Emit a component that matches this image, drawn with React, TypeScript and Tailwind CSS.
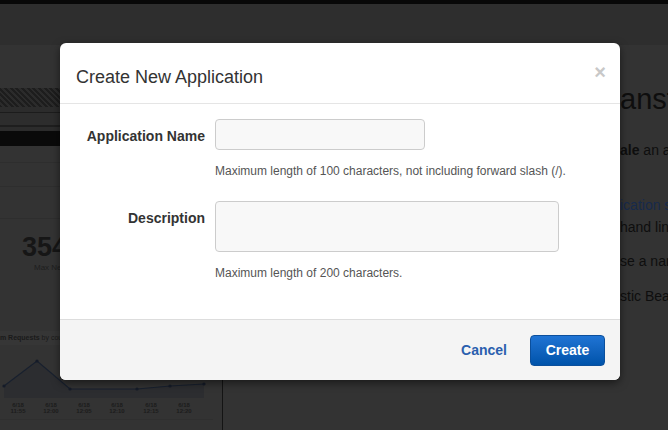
import React from 'react';

const chartPoints: [number, number][] = [
  [4, 39],
  [37, 14],
  [70, 42],
  [137, 42],
  [170, 39],
  [204, 37],
];

const chartLabels = [
  { x: 18, time: '11:55' },
  { x: 51, time: '12:00' },
  { x: 84, time: '12:05' },
  { x: 117, time: '12:10' },
  { x: 151, time: '12:15' },
  { x: 184, time: '12:20' },
];

const RequestsChart: React.FC = () => {
  const line = chartPoints.map(([x, y]) => `${x},${y}`).join(' ');
  const area = `4,51 ${line} 204,51`;
  return (
    <svg width="213" height="72" viewBox="0 0 213 72" className="block">
      <polygon points={area} fill="#2c2d30" />
      <polyline points={line} fill="none" stroke="#18202e" strokeWidth="1.2" />
      {chartPoints.map(([x, y]) => (
        <circle key={x} cx={x} cy={y} r="1.6" fill="#151b28" />
      ))}
      {chartLabels.map((l) => (
        <g key={l.x} fill="#1c1c1c" fontSize="6" fontWeight="bold" textAnchor="middle">
          <text x={l.x} y={60}>6/18</text>
          <text x={l.x} y={66}>{l.time}</text>
        </g>
      ))}
    </svg>
  );
};

const LeftColumn: React.FC = () => (
  <div className="w-[223px] shrink-0 border-r border-[#141414] flex flex-col">
    <div className="h-[43px]" />
    <div className="h-[19px] bg-[repeating-linear-gradient(45deg,#1d1d1d_0px,#1d1d1d_2px,#2b2b2b_2px,#2b2b2b_4px)]" />
    <div className="h-[5px] bg-[#2c2c2c]" />
    <div className="h-[1px] bg-[#1c1c1c]" />
    <div className="h-[12px] bg-[#2d2d2d]" />
    <div className="h-[2px] bg-[#1e1e1e]" />
    <div className="h-[4px] bg-[#2c2c2c]" />
    <div className="h-[15px] bg-[#0a0a0a]" />
    <div className="h-[17px] border-b border-[#2e2e2e]" />
    <div className="h-[24px] border-b border-[#2e2e2e]" />
    <div className="h-[32px] border-b border-[#2e2e2e]" />
    <div className="pl-[22px] pt-[12px]">
      <div className="text-[27px] leading-[32px] font-bold text-[#161616]">354</div>
      <div className="pl-[12px] text-[8px] leading-[10px] text-[#1e1e1e]">Max Network Out</div>
    </div>
    <div className="mt-[58px] mr-[9px] h-[14px] bg-[#363636] flex items-center">
      <span className="-ml-[9px] text-[7px] text-[#1a1a1a]">
        <b>Sum Requests</b> by count
      </span>
    </div>
    <div className="mr-[9px] pt-[2px] border-b border-[#2f2f2f]">
      <RequestsChart />
    </div>
  </div>
);

const Line: React.FC<{ hidden: React.ReactNode; children: React.ReactNode; className?: string }> = ({
  hidden,
  children,
  className = '',
}) => (
  <div className={`flex whitespace-nowrap ${className}`}>
    <span className="w-[397px] shrink-0 text-right overflow-hidden">{hidden}</span>
    <span>{children}</span>
  </div>
);

const RightColumn: React.FC = () => (
  <div className="flex-1 min-w-0 overflow-hidden text-[#0e0e0e]">
    <div className="pt-[37px]">
      <Line hidden="Welcome to AWS Elastic Be" className="text-[29px] leading-[34px]">
        anstalk
      </Line>
    </div>
    <div className="mt-[24px] text-[14px] leading-[20px]">
      <Line hidden={<>You can deploy and <b>sc</b></>}>
        <b>ale</b> an application
      </Line>
    </div>
    <div className="mt-[34px] text-[14px] leading-[22px]">
      <Line hidden="Use the Appl">
        <span className="text-[#172a4c]">ication setup</span>
      </Line>
      <Line hidden="or the comm">hand line tools</Line>
    </div>
    <div className="mt-[13px] text-[14px] leading-[20px]">
      <Line hidden="To begin, choo">se a name</Line>
    </div>
    <div className="mt-[15px] text-[14px] leading-[20px]">
      <Line hidden="for your Ela">stic Beanstalk</Line>
    </div>
  </div>
);

const Modal: React.FC = () => (
  <div className="absolute left-[60px] top-[43px] w-[560px] rounded-[6px] bg-white shadow-[0_3px_9px_rgba(0,0,0,0.5)] overflow-hidden">
    <div className="h-[61px] pl-[16px] pr-[14px] flex items-center justify-between border-b border-[#e5e5e5]">
      <h3 className="text-[18px] leading-[20px] pt-[7px] text-[#333]">Create New Application</h3>
      <button className="text-[20px] leading-[20px] font-bold text-[#c8c8c8] -mt-[3px]">×</button>
    </div>
    <div className="pl-[16px] pt-[15px] pb-[37px] grid grid-cols-[129px_1fr] gap-x-[10px] text-[#333]">
      <label className="text-right text-[14px] leading-[20px] font-bold pt-[7px]">Application Name</label>
      <div>
        <input
          type="text"
          className="block w-[210px] h-[31px] rounded-[4px] border border-[#cccccc] bg-[#f8f8f8]"
        />
        <p className="mt-[12px] text-[12px] leading-[18px] text-[#555]">
          Maximum length of 100 characters, not including forward slash (/).
        </p>
      </div>
      <label className="mt-[21px] text-right text-[14px] leading-[20px] font-bold pt-[7px]">Description</label>
      <div className="mt-[21px]">
        <textarea className="block w-[344px] h-[51px] rounded-[4px] border border-[#cccccc] bg-[#f8f8f8] resize-none" />
        <p className="mt-[12px] text-[12px] leading-[18px] text-[#555]">Maximum length of 200 characters.</p>
      </div>
    </div>
    <div className="h-[61px] border-t border-[#dddddd] bg-[#f4f4f4] flex items-center justify-end pr-[15px] gap-[23px]">
      <button className="text-[14px] font-bold text-[#2a5fae]">Cancel</button>
      <button className="w-[75px] h-[31px] rounded-[4px] border border-[#0b4f9c] bg-linear-to-b from-[#1f74d4] to-[#0053aa] text-[14px] font-bold text-white">
        Create
      </button>
    </div>
  </div>
);

export default function App() {
  return (
    <div className="relative w-[668px] h-[430px] overflow-hidden bg-[#333333] font-['Liberation_Sans',Arial,sans-serif]">
      <div className="h-[4px] bg-[#080808]" />
      <div className="h-[41px] bg-[#2e2e2e]" />
      <div className="flex h-[385px]">
        <LeftColumn />
        <RightColumn />
      </div>
      <Modal />
    </div>
  );
}
